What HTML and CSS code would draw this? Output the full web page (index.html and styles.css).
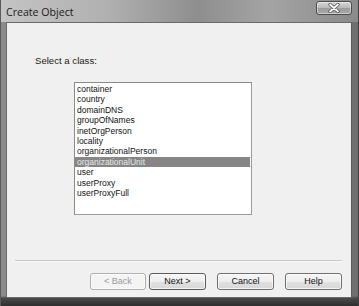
FILE: index.html
```html
<!DOCTYPE html>
<html>
<head>
<meta charset="utf-8">
<link rel="stylesheet" href="styles.css">
</head>
<body>
<div class="window">
  <div class="titlebar">
    <span class="title">Create Object</span>
    <div class="close">
      <svg width="12" height="10" viewBox="0 0 12 10"><path d="M2 1.5 L10 8.5 M10 1.5 L2 8.5" stroke="#4a4a4a" stroke-width="3.2" stroke-linecap="round"/><path d="M2 1.5 L10 8.5 M10 1.5 L2 8.5" stroke="#ffffff" stroke-width="1.8" stroke-linecap="round"/></svg>
    </div>
  </div>
  <div class="client">
    <div class="body">
      <div class="label">Select a class:</div>
      <ul class="list">
        <li>container</li>
        <li>country</li>
        <li>domainDNS</li>
        <li>groupOfNames</li>
        <li>inetOrgPerson</li>
        <li>locality</li>
        <li>organizationalPerson</li>
        <li class="sel">organizationalUnit</li>
        <li>user</li>
        <li>userProxy</li>
        <li>userProxyFull</li>
      </ul>
    </div>
    <div class="sep"></div>
    <div class="buttons">
      <button class="btn disabled">&lt; Back</button>
      <button class="btn next">Next &gt;</button>
      <button class="btn cancel">Cancel</button>
      <button class="btn help">Help</button>
    </div>
  </div>
</div>
</body>
</html>
```
FILE: styles.css
```css
html, body {
  margin: 0;
  padding: 0;
  width: 359px;
  height: 306px;
  overflow: hidden;
  background: #3a3a3a;
}
.window {
  width: 359px;
  height: 306px;
  box-sizing: border-box;
  display: flex;
  flex-direction: column;
  background:
    linear-gradient(to bottom, rgba(0,0,0,0) 0, rgba(0,0,0,0) 296px, #4a4a4a 298px, #2e2e2e 306px),
    linear-gradient(to right, #8a8a8a 0, #a8a8a8 25%, #808080 45%, #9a9a9a 70%, #6e6e6e 100%);
  border-left: 1px solid #5a5a5a;
  border-right: 1px solid #3e3e3e;
  font-family: "Liberation Sans", Arial, sans-serif;
}
.titlebar {
  height: 22px;
  flex: none;
  display: flex;
  align-items: flex-start;
  justify-content: space-between;
  background: linear-gradient(to right, #c4c4c4 0, #b0b0b0 30%, #8e8e8e 55%, #a4a4a4 75%, #8a8a8a 100%);
}
.title {
  font-family: "Open Sans", "Liberation Sans", sans-serif;
  font-size: 10.6px;
  color: #1a1a1a;
  margin: 5px 0 0 5px;
  line-height: 14px;
}
.close {
  width: 36px;
  height: 14px;
  margin: 1px 6px 0 0;
  box-sizing: border-box;
  border: 1px solid #4c4c4c;
  border-radius: 3px;
  background: linear-gradient(to bottom, #d6d6d6 0, #b8b8b8 50%, #9c9c9c 51%, #a8a8a8 100%);
  box-shadow: inset 0 0 0 1px rgba(255,255,255,0.45);
  display: flex;
  align-items: center;
  justify-content: center;
}
.client {
  flex: 1;
  margin: 0 6px 8px 5px;
  background: #f0f0f0;
  border: 1px solid #6a6a6a;
  border-right-color: #5a5a5a;
  display: flex;
  flex-direction: column;
  box-sizing: border-box;
}
.body {
  flex: 1;
  padding: 32px 0 0 28px;
}
.label {
  font-size: 9.6px;
  line-height: 12px;
  color: #1a1a1a;
}
.list {
  list-style: none;
  margin: 15px 0 0 39px;
  padding: 1px 1px 0 0;
  width: 178px;
  height: 133px;
  box-sizing: border-box;
  background: #ffffff;
  border: 1px solid #9a9a9a;
  border-top-color: #8a8a8a;
  border-left-color: #8a8a8a;
}
.list li {
  font-family: "Liberation Sans", Arial, sans-serif;
  font-size: 8.5px;
  line-height: 10.4px;
  height: 10.4px;
  padding-left: 2px;
  color: #111;
  white-space: nowrap;
}
.list li.sel {
  background: #868686;
  color: #e6e6e6;
}
.sep {
  height: 1px;
  background: #c8c8c8;
  margin: 0 9px 11px 8px;
  border-bottom: 1px solid #fafafa;
}
.buttons {
  display: flex;
  padding: 0 9px 7px 0;
  justify-content: flex-end;
}
.btn {
  width: 57px;
  height: 17px;
  box-sizing: border-box;
  padding: 0;
  margin: 0;
  border: 1px solid #707070;
  border-radius: 3px;
  background: linear-gradient(to bottom, #f6f6f6 0, #eeeeee 50%, #e0e0e0 51%, #d8d8d8 100%);
  box-shadow: inset 0 0 0 1px rgba(255,255,255,0.7);
  font-family: "Liberation Sans", Arial, sans-serif;
  font-size: 9px;
  color: #111;
  line-height: 15px;
}
.btn.disabled {
  width: 56px;
  color: #9a9a9a;
  border-color: #b0b0b0;
  background: #f4f4f4;
}
.btn.next {
  margin-left: 3px;
  border-color: #5a5a5a;
}
.btn.cancel {
  margin-left: 11px;
}
.btn.help {
  margin-left: 11px;
}
```
